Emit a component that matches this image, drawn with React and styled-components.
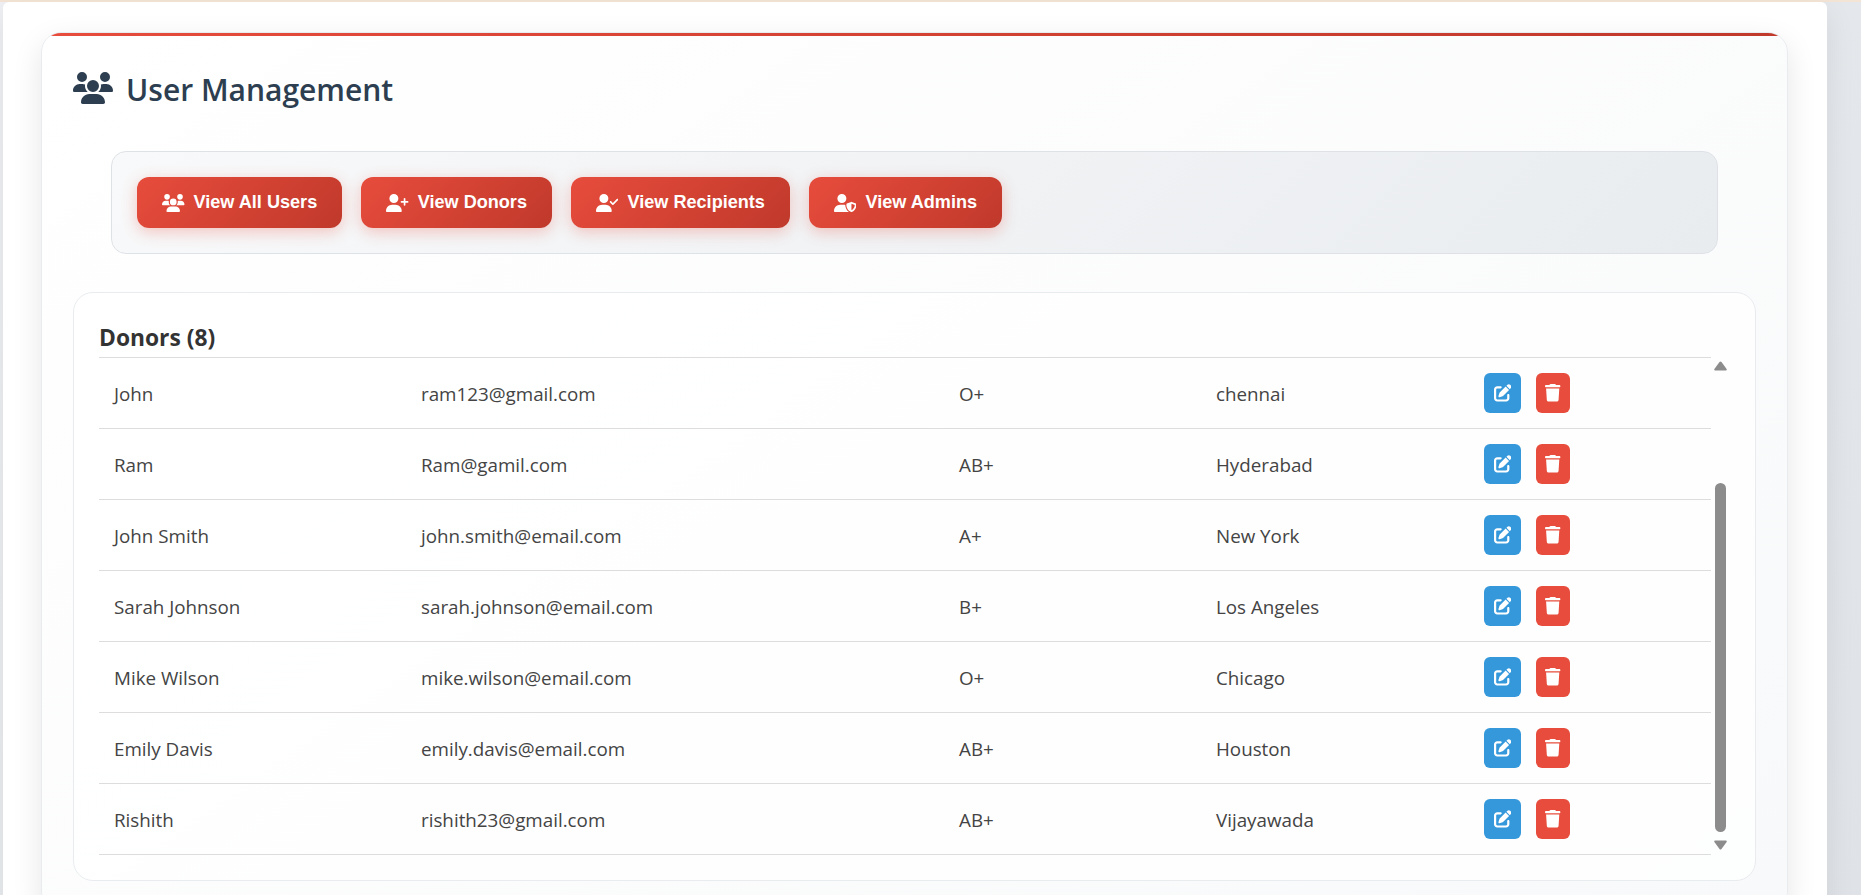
import React from 'react';
import styled, { createGlobalStyle } from 'styled-components';
import { FaUsers, FaUserPlus, FaUserCheck, FaUserShield, FaPenToSquare, FaTrash } from 'react-icons/fa6';

const GlobalStyle = createGlobalStyle`
  html, body { margin: 0; padding: 0; height: 100%; overflow: hidden; }
  body {
    font-family: "Open Sans", "Noto Sans", sans-serif;
    background: linear-gradient(135deg, #eef0f3 0%, #dfe3e7 100%);
  }
  * { box-sizing: border-box; }
`;

const Page = styled.div`
  height: 895px;
  overflow: hidden;
`;

const TopStrip = styled.div`
  height: 2px;
  background: #f3e4d6;
`;

const Container = styled.main`
  width: 1824px;
  margin-left: 3px;
  padding: 30px 39px 0 38px;
  background: #fff;
  border-radius: 6px 6px 0 0;
  box-shadow: 0 10px 30px rgba(0, 0, 0, 0.08);
`;

const Card = styled.section`
  position: relative;
  overflow: hidden;
  padding: 30px 31px 30px 31px;
  background: linear-gradient(145deg, #ffffff, #f8f9fa);
  border: 1px solid #e9ecef;
  border-radius: 20px;
  box-shadow: 0 10px 30px rgba(0, 0, 0, 0.1);
  &::before {
    content: '';
    position: absolute;
    inset: 0 0 auto 0;
    height: 3px;
    background: linear-gradient(90deg, #e74c3c, #c0392b);
  }
`;

const Title = styled.h2`
  display: flex;
  align-items: center;
  gap: 13px;
  margin: 6px 0 42px;
  height: 40px;
  color: #2c3e50;
  font-size: 30px;
  font-weight: 600;
  line-height: 42px;
  svg { width: 40px; height: 32px; margin-top: -2px; flex: none; }
`;

const TitleText = styled.span`
  padding-top: 2px;
`;

const Toolbar = styled.div`
  display: flex;
  gap: 19px;
  margin: 0 38px 38px;
  padding: 25px;
  height: 103px;
  background: linear-gradient(135deg, #f8f9fa, #e9ecef);
  border: 1px solid #dee2e6;
  border-radius: 15px;
`;

const FilterButton = styled.button`
  display: flex;
  align-items: center;
  gap: 9px;
  height: 51px;
  padding: 0 25px;
  color: #fff;
  font-family: "Liberation Sans", Arial, sans-serif;
  font-size: 18.1px;
  font-weight: 700;
  background: linear-gradient(135deg, #e74c3c, #c0392b);
  border: 0;
  border-radius: 12px;
  box-shadow: 0 4px 15px rgba(231, 76, 60, 0.3);
  white-space: nowrap;
  svg { width: 22.5px; height: 18px; flex: none; }
`;

const Panel = styled.div`
  padding: 27px 25px 25px;
  background: rgba(255, 255, 255, 0.75);
  border: 1px solid #e9ecef;
  border-radius: 20px;
`;

const PanelHeading = styled.h3`
  margin: 0;
  height: 38px;
  width: 1612px;
  color: #333;
  font-size: 22.8px;
  font-weight: 700;
  line-height: 36px;
  border-bottom: 1px solid #ddd;
`;

const ScrollArea = styled.div`
  display: flex;
  height: 497px;
`;

const Rows = styled.div`
  width: 1612px;
  flex: none;
`;

const Row = styled.div`
  display: grid;
  grid-template-columns: 307px 538px 257px 268px 242px;
  align-items: center;
  height: 71px;
  border-bottom: 1px solid #ddd;
  color: #444;
  font-size: 18.8px;
`;

const Cell = styled.div`
  padding: 1px 0 0 15px;
  white-space: nowrap;
`;

const Actions = styled.div`
  display: flex;
  gap: 15px;
  padding-left: 15px;
`;

const ActionButton = styled.button`
  display: flex;
  align-items: center;
  justify-content: center;
  height: 40px;
  padding: 0 9.6px;
  color: #fff;
  background: ${p => (p.$danger ? '#e74c3c' : '#3498db')};
  border: 0;
  border-radius: 6px;
  svg { width: ${p => (p.$danger ? '15.4px' : '17.6px')}; height: 17.6px; }
`;

const Scrollbar = styled.div`
  width: 19px;
  flex: none;
  display: flex;
  flex-direction: column;
  align-items: center;
  padding: 3px 0 5px;
`;

const Arrow = styled.svg`
  width: 13px;
  height: 10px;
  flex: none;
  fill: #8c8c8c;
  transform: ${p => (p.$down ? 'rotate(180deg)' : 'none')};
`;

const Thumb = styled.div`
  width: 11px;
  height: 349px;
  margin: auto 0 8px;
  background: #8c8c8c;
  border-radius: 6px;
`;

const donors = [
  ['John', 'ram123@gmail.com', 'O+', 'chennai'],
  ['Ram', 'Ram@gamil.com', 'AB+', 'Hyderabad'],
  ['John Smith', 'john.smith@email.com', 'A+', 'New York'],
  ['Sarah Johnson', 'sarah.johnson@email.com', 'B+', 'Los Angeles'],
  ['Mike Wilson', 'mike.wilson@email.com', 'O+', 'Chicago'],
  ['Emily Davis', 'emily.davis@email.com', 'AB+', 'Houston'],
  ['Rishith', 'rishith23@gmail.com', 'AB+', 'Vijayawada'],
];

const filters = [
  [FaUsers, 'View All Users'],
  [FaUserPlus, 'View Donors'],
  [FaUserCheck, 'View Recipients'],
  [FaUserShield, 'View Admins'],
];

const ArrowIcon = ({ down }) => (
  <Arrow $down={down} viewBox="0 0 13 10">
    <path d="M6.5 0.5 Q7 0.5 7.5 1 L12.6 8 Q13.2 9.5 11.8 9.5 L1.2 9.5 Q-0.2 9.5 0.4 8 L5.5 1 Q6 0.5 6.5 0.5 Z" />
  </Arrow>
);

export default function App() {
  return (
    <Page>
      <GlobalStyle />
      <TopStrip />
      <Container>
        <Card>
          <Title><FaUsers /><TitleText>User Management</TitleText></Title>
          <Toolbar>
            {filters.map(([Icon, label]) => (
              <FilterButton key={label}><Icon />{label}</FilterButton>
            ))}
          </Toolbar>
          <Panel>
            <PanelHeading>Donors (8)</PanelHeading>
            <ScrollArea>
              <Rows>
                {donors.map(([name, email, blood, city]) => (
                  <Row key={email}>
                    <Cell>{name}</Cell>
                    <Cell>{email}</Cell>
                    <Cell>{blood}</Cell>
                    <Cell>{city}</Cell>
                    <Actions>
                      <ActionButton aria-label="Edit"><FaPenToSquare /></ActionButton>
                      <ActionButton $danger aria-label="Delete"><FaTrash /></ActionButton>
                    </Actions>
                  </Row>
                ))}
              </Rows>
              <Scrollbar>
                <ArrowIcon />
                <Thumb />
                <ArrowIcon down />
              </Scrollbar>
            </ScrollArea>
          </Panel>
        </Card>
      </Container>
    </Page>
  );
}
